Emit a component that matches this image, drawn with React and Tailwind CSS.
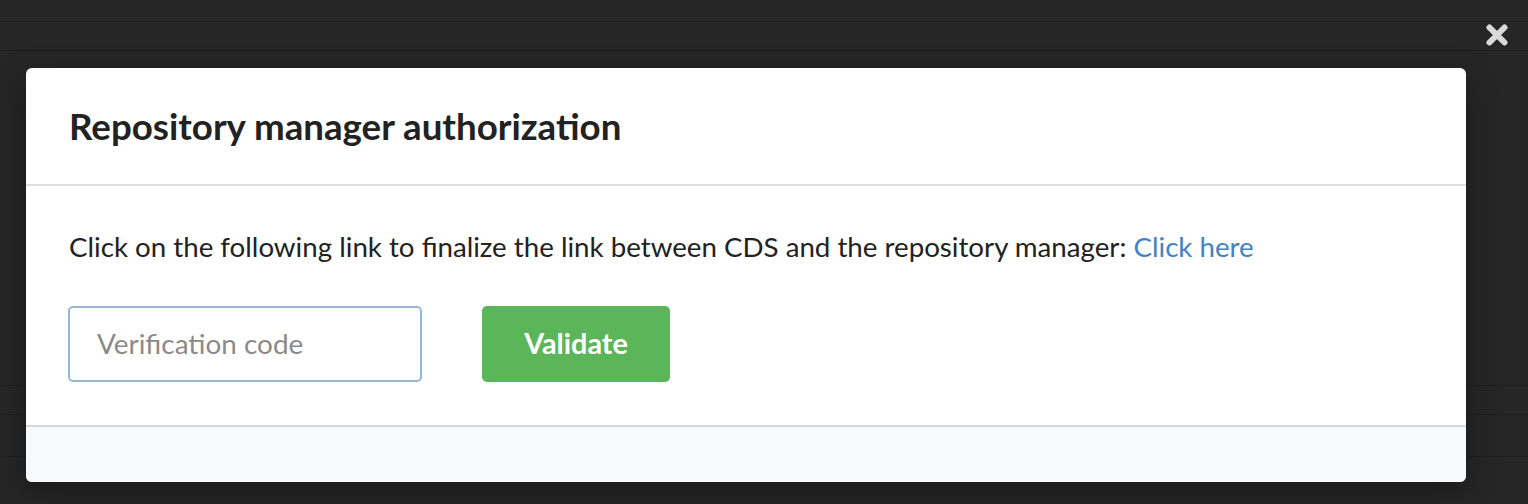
import React from "react";

export default function App() {
  return (
    <div className="relative w-[1528px] h-[504px] overflow-hidden bg-[#262626]" style={{ fontFamily: "Lato, 'Open Sans', sans-serif" }}>
      {/* background rows */}
      <div className="flex flex-col">
        <div className="h-[22px] border-b border-[#1e1e1e]" />
        <div className="h-[29px] border-b border-[#1e1e1e]" />
        <div className="h-[335px] border-b border-[#1e1e1e]" />
        <div className="h-[29px] border-b border-[#1e1e1e]" />
        <div className="h-[42px] border-b border-[#1e1e1e]" />
      </div>

      {/* close icon */}
      <div className="absolute left-[1485px] top-[23px] w-[24px] h-[24px]">
        <svg viewBox="0 0 24 24" width="24" height="24">
          <path d="M4.5 4.5 L19.5 19.5 M19.5 4.5 L4.5 19.5" stroke="#d9d9d9" strokeWidth="6" strokeLinecap="round" />
        </svg>
      </div>

      {/* modal */}
      <div className="absolute left-[26px] top-[68px] w-[1440px] h-[414px] bg-white rounded-[6px] shadow-[0_10px_30px_rgba(0,0,0,0.35)] flex flex-col overflow-hidden">
        <div className="h-[118px] border-b-2 border-[#dedede] px-[43px] flex items-center">
          <h1 className="text-[36.7px] font-bold text-[#222] leading-none">Repository manager authorization</h1>
        </div>
        <div className="flex-1 px-[42px] pt-[44px]">
          <p className="pl-px text-[27.7px] text-[#222] leading-[34px]">
            Click on the following link to finalize the link between CDS and the repository manager:{" "}
            <a className="text-[#4183c4]">Click here</a>
          </p>
          <div className="flex items-center gap-[60px] mt-[42px]">
            <div className="w-[354px] h-[76px] border-2 border-[#96b6d8] rounded-[5px] flex items-center px-[27px]">
              <span className="text-[27.9px] text-[#8a8a8a]">Verification code</span>
            </div>
            <div className="w-[188px] h-[76px] bg-[#5bb65a] rounded-[5px] flex items-center justify-center">
              <span className="text-[28.8px] font-bold text-white">Validate</span>
            </div>
          </div>
        </div>
        <div className="h-[57px] bg-[#f8f9fa] border-t-2 border-[#d6d6d6]" />
      </div>
    </div>
  );
}
